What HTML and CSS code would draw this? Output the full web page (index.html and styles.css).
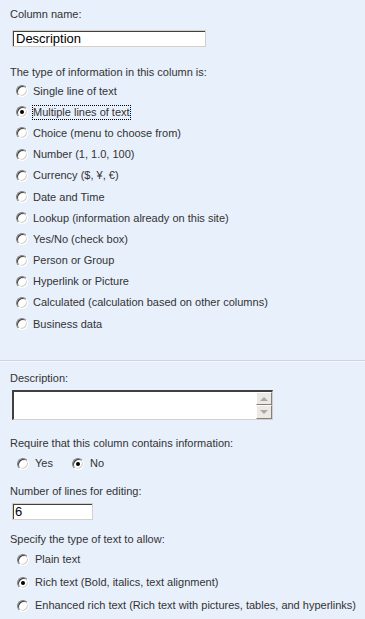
FILE: index.html
```html
<!DOCTYPE html>
<html lang="en">
<head>
    <meta charset="UTF-8">
    <title>Column settings</title>
    <link rel="stylesheet" href="styles.css">
</head>
<body>
    <div class="section">
        <div class="field-label">Column name:</div>
        <div class="textbox name-box">Description</div>

        <div class="field-label type-label">The type of information in this column is:</div>
        <ul class="radio-list type-list">
            <li><span class="radio"></span><span class="opt">Single line of text</span></li>
            <li><span class="radio checked"></span><span class="opt focused">Multiple lines of text</span></li>
            <li><span class="radio"></span><span class="opt">Choice (menu to choose from)</span></li>
            <li><span class="radio"></span><span class="opt">Number (1, 1.0, 100)</span></li>
            <li><span class="radio"></span><span class="opt">Currency ($, &yen;, &euro;)</span></li>
            <li><span class="radio"></span><span class="opt">Date and Time</span></li>
            <li><span class="radio"></span><span class="opt">Lookup (information already on this site)</span></li>
            <li><span class="radio"></span><span class="opt">Yes/No (check box)</span></li>
            <li><span class="radio"></span><span class="opt">Person or Group</span></li>
            <li><span class="radio"></span><span class="opt">Hyperlink or Picture</span></li>
            <li><span class="radio"></span><span class="opt">Calculated (calculation based on other columns)</span></li>
            <li><span class="radio"></span><span class="opt">Business data</span></li>
        </ul>
    </div>

    <div class="divider"></div>

    <div class="section second">
        <div class="field-label">Description:</div>
        <div class="textarea">
            <div class="scroller">
                <span class="scroll-btn up"></span>
                <span class="scroll-btn down"></span>
            </div>
        </div>

        <div class="field-label require-label">Require that this column contains information:</div>
        <div class="inline-radios">
            <span class="radio"></span><span class="opt">Yes</span>
            <span class="radio checked no-radio"></span><span class="opt">No</span>
        </div>

        <div class="field-label lines-label">Number of lines for editing:</div>
        <div class="textbox lines-box">6</div>

        <div class="field-label text-type-label">Specify the type of text to allow:</div>
        <ul class="radio-list text-list">
            <li><span class="radio"></span><span class="opt">Plain text</span></li>
            <li><span class="radio checked"></span><span class="opt">Rich text (Bold, italics, text alignment)</span></li>
            <li><span class="radio"></span><span class="opt">Enhanced rich text (Rich text with pictures, tables, and hyperlinks)</span></li>
        </ul>
    </div>
</body>
</html>
```

FILE: styles.css
```css
:root {
    --background: #e8f0fc;
    --text: #333333;
    --dark-edge: #404040;
    --mid-edge: #808080;
    --light-edge: #d4d0c8;
}

body {
    margin: 0;
    background: var(--background);
    color: var(--text);
    font-family: "Liberation Sans", Arial, sans-serif;
    font-size: 11px;
}

.section {
    padding: 7px 0 0 10px;
}

.section.second {
    padding-top: 9px;
}

.field-label {
    line-height: 14px;
    height: 14px;
}

.textbox {
    box-sizing: border-box;
    height: 17px;
    background: #fff;
    border-top: 1px solid var(--mid-edge);
    border-left: 1px solid var(--mid-edge);
    border-right: 1px solid #fff;
    border-bottom: 1px solid #fff;
    box-shadow: inset 1px 1px 0 var(--dark-edge), 0 0 0 0 transparent;
    outline: 1px solid var(--light-edge);
    outline-offset: -1px;
    color: #000;
    font-size: 13px;
    line-height: 15px;
    padding-left: 3px;
}

.name-box {
    width: 194px;
    margin: 9px 0 0 2px;
}

.type-label {
    margin-top: 18px;
}

.radio-list {
    list-style: none;
    margin: 1.5px 0 0 6px;
    padding: 0;
}

.radio-list li {
    display: flex;
    align-items: center;
    height: 21.2px;
}

.text-list {
    margin-top: 2.5px;
    margin-left: 7px;
}

.text-list li {
    height: 23px;
}

.text-list .opt {
    margin-left: 6px;
}

.radio {
    position: relative;
    box-sizing: border-box;
    flex: none;
    width: 12px;
    height: 12px;
    border-radius: 50%;
    background: #fff;
    border: 1px solid;
    border-color: var(--mid-edge) #fff #fff var(--mid-edge);
    box-shadow: inset 1px 1px 0 var(--dark-edge), inset -1px -1px 0 var(--light-edge);
}

.radio.checked::after {
    content: "";
    position: absolute;
    left: 3px;
    top: 3px;
    width: 4px;
    height: 4px;
    border-radius: 50%;
    background: #000;
}

.opt {
    margin-left: 5px;
    white-space: nowrap;
    line-height: 13px;
}

.opt.focused {
    outline: 1px dotted #000;
    outline-offset: 0;
}

.divider {
    margin-top: 25px;
    height: 0;
    border-top: 1px solid #cfd6df;
    border-bottom: 1px solid #f4f8fe;
}

.textarea {
    box-sizing: border-box;
    width: 261px;
    height: 30px;
    margin: 5px 0 0 2px;
    background: #fff;
    border-top: 2px solid var(--dark-edge);
    border-left: 2px solid var(--dark-edge);
    border-right: 1px solid var(--light-edge);
    border-bottom: 1px solid var(--light-edge);
    display: flex;
    justify-content: flex-end;
}

.scroller {
    display: flex;
    flex-direction: column;
    width: 16px;
}

.scroll-btn {
    position: relative;
    flex: 1;
    box-sizing: border-box;
    background: #ece9e4;
    border: 1px solid;
    border-color: #fff #808080 #808080 #fff;
}

.scroll-btn::after {
    content: "";
    position: absolute;
    left: 3px;
    width: 0;
    height: 0;
    border-left: 4px solid transparent;
    border-right: 4px solid transparent;
}

.scroll-btn.up::after {
    top: 4px;
    border-bottom: 4px solid #a8a8a8;
}

.scroll-btn.down::after {
    top: 4px;
    border-top: 4px solid #a8a8a8;
}

.require-label {
    margin-top: 16px;
}

.inline-radios {
    display: flex;
    align-items: center;
    height: 21px;
    margin: 3.5px 0 0 7px;
}

.inline-radios .opt {
    margin-left: 6px;
}

.no-radio {
    margin-left: 19px;
}

.lines-label {
    margin-top: 9.5px;
}

.lines-box {
    width: 81px;
    margin: 5px 0 0 2px;
    padding-left: 2px;
}

.text-type-label {
    margin-top: 12px;
}
```
